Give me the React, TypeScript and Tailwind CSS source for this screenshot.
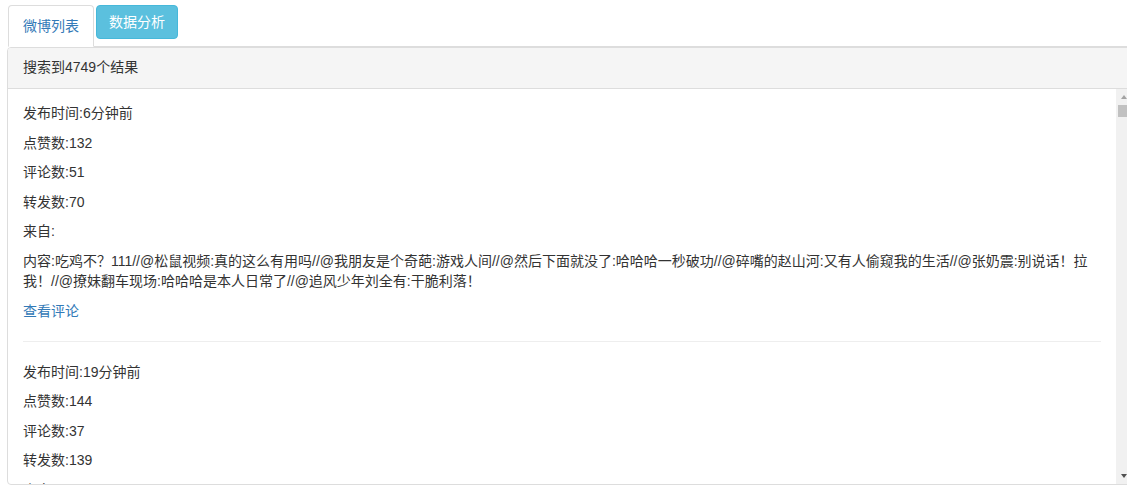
const items = [
  {
    time: "6分钟前",
    likes: 132,
    comments: 51,
    reposts: 70,
    from: "",
    content:
      "吃鸡不？111//@松鼠视频:真的这么有用吗//@我朋友是个奇葩:游戏人间//@然后下面就没了:哈哈哈一秒破功//@碎嘴的赵山河:又有人偷窥我的生活//@张奶震:别说话！拉我！//@撩妹翻车现场:哈哈哈是本人日常了//@追风少年刘全有:干脆利落！",
  },
  {
    time: "19分钟前",
    likes: 144,
    comments: 37,
    reposts: 139,
    from: "",
    content: "转发微博",
  },
  {
    time: "25分钟前",
    likes: 98,
    comments: 22,
    reposts: 41,
    from: "",
    content: "今天也要开开心心的呀",
  },
];

function WeiboItem({ item, last }: { item: (typeof items)[number]; last: boolean }) {
  return (
    <div>
      <p className="mb-[9.6px]">发布时间:{item.time}</p>
      <p className="mb-[9.6px]">点赞数:{item.likes}</p>
      <p className="mb-[9.6px]">评论数:{item.comments}</p>
      <p className="mb-[9.6px]">转发数:{item.reposts}</p>
      <p className="mb-[9.6px]">来自:{item.from}</p>
      <p className="mb-[9.6px]">内容:{item.content}</p>
      <p className="mb-[9.6px]">
        <a href="#" className="text-[#337ab7] hover:underline">
          查看评论
        </a>
      </p>
      {!last && <hr className="mt-[20px] mb-[20px] border-0 border-t border-[#eee]" />}
    </div>
  );
}

// headless screenshots hide native scrollbars, so draw the classic one
function Scrollbar() {
  return (
    <div className="w-[15px] shrink-0 bg-[#f1f1f1] flex flex-col">
      <div className="h-[16px] flex items-center justify-center">
        <div className="w-0 h-0 border-l-[3.5px] border-r-[3.5px] border-b-[4px] border-l-transparent border-r-transparent border-b-[#a3a3a3]" />
      </div>
      <div className="h-[12px] mx-[2px] bg-[#c1c1c1]" />
      <div className="flex-1" />
      <div className="h-[16px] flex items-center justify-center">
        <div className="w-0 h-0 border-l-[3.5px] border-r-[3.5px] border-t-[4px] border-l-transparent border-r-transparent border-t-[#505050]" />
      </div>
    </div>
  );
}

export default function App() {
  return (
    <div
      className="bg-white text-[14px] leading-[20px] text-[#333] pt-[5px] pl-[7px] overflow-hidden"
      style={{ fontFamily: '"Liberation Sans", "Noto Sans CJK SC", sans-serif' }}
    >
      <ul className="flex items-start border-b border-[#ddd] ml-[1px]">
        <li className="-mb-px mr-[2px]">
          <a
            href="#"
            className="block px-[14px] py-[10px] border border-[#ddd] border-b-transparent rounded-t-[4px] bg-white text-[#337ab7]"
          >
            微博列表
          </a>
        </li>
        <li>
          <button className="px-[12px] py-[6px] border border-[#46b8da] bg-[#5bc0de] text-white rounded-[4px]">
            数据分析
          </button>
        </li>
      </ul>
      <div className="w-[1125px] border border-[#ddd] rounded-[4px] bg-white">
        <div className="bg-[#f5f5f5] border-b border-[#ddd] px-[15px] pt-[9px] pb-[11px] rounded-t-[3px]">
          搜索到4749个结果
        </div>
        <div className="flex h-[395px]">
          <div className="flex-1 overflow-hidden px-[15px] pt-[14px]">
            {items.map((item, i) => (
              <WeiboItem key={i} item={item} last={i === items.length - 1} />
            ))}
          </div>
          <Scrollbar />
        </div>
      </div>
    </div>
  );
}
